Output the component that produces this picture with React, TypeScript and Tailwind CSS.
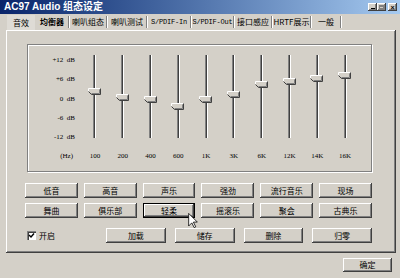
import React from "react"

const bevel =
  "shadow-[inset_-1px_-1px_0_#404040,inset_1px_1px_0_#ffffff,inset_-2px_-2px_0_#808080]"

const tabs = [
  { name: "均衡器", w: "w-[32px]", mono: false },
  { name: "喇叭组态", w: "w-[36px]", mono: false },
  { name: "喇叭测试", w: "w-[38px]", mono: false },
  { name: "S/PDIF-In", w: "w-[42px]", mono: true },
  { name: "S/PDIF-Out", w: "w-[41px]", mono: true },
  { name: "接口感应", w: "w-[36px]", mono: false },
  { name: "HRTF展示", w: "w-[37px]", mono: false },
  { name: "一般", w: "w-[28px]", mono: false },
]

// thumb centre, in page pixels
const bands = [
  { label: "100", y: 91 },
  { label: "200", y: 97 },
  { label: "400", y: 99 },
  { label: "600", y: 106 },
  { label: "1K", y: 99 },
  { label: "3K", y: 94 },
  { label: "6K", y: 84 },
  { label: "12K", y: 81 },
  { label: "14K", y: 78 },
  { label: "16K", y: 75 },
]

const dbLabels = ["+12 dB", "+6 dB", "0 dB", "-6 dB", "-12 dB"]

const presetsA = ["低音", "高音", "声乐", "强劲", "流行音乐", "现场"]
const presetsB = ["舞曲", "俱乐部", "轻柔", "摇滚乐", "聚会", "古典乐"]

function Button({ children, focused = false }: { children: React.ReactNode; focused?: boolean }) {
  return (
    <div
      className={`h-[15px] flex items-center justify-center bg-[#d4d0c8] text-[8px] leading-none ${
        focused
          ? "shadow-[inset_0_0_0_1px_#000000,inset_-2px_-2px_0_#404040,inset_2px_2px_0_#ffffff,inset_-3px_-3px_0_#808080]"
          : bevel
      }`}
    >
      {children}
    </div>
  )
}

function Thumb() {
  return (
    <svg width="13" height="7" viewBox="0 0 13 7">
      <polygon points="0.5,0.5 12.5,0.5 12.5,6.5 3.5,6.5 0.5,3.5" fill="#d4d0c8" />
      <polyline points="0.5,3.5 0.5,0.5 12.5,0.5" fill="none" stroke="#ffffff" />
      <polyline points="0.5,3.5 3.5,6.5 12.5,6.5 12.5,0.5" fill="none" stroke="#404040" />
      <polyline points="3.5,5.5 11.5,5.5 11.5,1.5" fill="none" stroke="#808080" />
    </svg>
  )
}

function Slider({ y }: { y: number }) {
  return (
    <div className="relative h-[89px] flex justify-center">
      <div className="mt-[1px] h-[83px] w-[3px] border-l border-[#808080] border-r border-r-white bg-[#404040]" />
      <div className="absolute left-[7px]" style={{ top: y - 54 - 3 }}>
        <Thumb />
      </div>
    </div>
  )
}

function Separator() {
  return <div className="self-center h-[12px] w-[2px] border-l border-[#808080] border-r border-r-white" />
}

export default function App() {
  return (
    <div className="relative w-[400px] h-[278px] overflow-hidden bg-[#d4d0c8] text-black font-['Noto_Sans_CJK_SC',sans-serif]">
      {/* title bar */}
      <div className="h-[14px] flex items-center justify-between pl-[4px] pr-[3px] bg-gradient-to-r from-[#0a246a] to-[#a6caf0]">
        <span className="text-white font-bold text-[10px] leading-none font-['Liberation_Sans','Noto_Sans_CJK_SC',sans-serif]">
          AC97 Audio 组态设定
        </span>
        <div className="flex items-center">
          <div className={`w-[9px] h-[8px] bg-[#d4d0c8] ${bevel} flex items-end justify-center pb-[2px]`}>
            <div className="w-[4px] h-[1px] bg-black" />
          </div>
          <div className={`w-[9px] h-[8px] bg-[#d4d0c8] ${bevel} flex items-center justify-center`}>
            <div className="w-[5px] h-[4px] border border-[#808080] border-t-2" />
          </div>
          <div className={`ml-[2px] w-[9px] h-[8px] bg-[#d4d0c8] ${bevel} flex items-center justify-center text-[7px] leading-none font-bold font-['Liberation_Sans',sans-serif]`}>
            ×
          </div>
        </div>
      </div>

      {/* tabs */}
      <div className="h-[16px] flex items-stretch pl-[7px] text-[8px] leading-none whitespace-nowrap">
        <div className="w-[28px] mt-[1px] flex items-center justify-center bg-[#dedbd5]">音效</div>
        <div className="w-[1px]" />
        {tabs.map((t) => (
          <React.Fragment key={t.name}>
            <div
              className={`${t.w} flex items-center justify-center whitespace-nowrap ${
                t.mono ? "font-['Liberation_Mono',monospace] text-[7px] tracking-[-0.2px]" : ""
              } ${t.name === "均衡器" ? "font-bold" : ""}`}
            >
              {t.name}
            </div>
            <Separator />
          </React.Fragment>
        ))}
      </div>

      {/* tab page */}
      <div className={`ml-[6px] w-[390px] h-[223px] pt-[14px] ${bevel}`}>
        {/* equalizer group */}
        <div className="ml-[21px] w-[345px] h-[128px] pt-[9px] border border-[#808080] shadow-[inset_1px_1px_0_#ffffff,1px_1px_0_#ffffff]">
          <div className="grid grid-cols-[53px_repeat(10,27.8px)] font-['Liberation_Serif',serif] text-[7px]">
            <div className="h-[89px] flex flex-col justify-between items-end pr-[6px]">
              {dbLabels.map((d) => (
                <div key={d} className="h-[12px] leading-[12px] whitespace-pre">
                  {d.replace(" ", "  ")}
                </div>
              ))}
            </div>
            {bands.map((b) => (
              <Slider key={b.label} y={b.y} />
            ))}
          </div>
          <div className="mt-[7px] grid grid-cols-[53px_repeat(10,27.8px)] font-['Liberation_Serif',serif] text-[7px] leading-[12px]">
            <div className="text-right pr-[8px]">(Hz)</div>
            {bands.map((b) => (
              <div key={b.label} className="text-center">
                {b.label}
              </div>
            ))}
          </div>
        </div>

        {/* presets */}
        <div className="mt-[11px] ml-[19px] w-[347px] grid grid-cols-6 gap-x-[6px] gap-y-[5px]">
          {presetsA.map((p) => (
            <Button key={p}>{p}</Button>
          ))}
          {presetsB.map((p) => (
            <Button key={p} focused={p === "轻柔"}>
              {p}
            </Button>
          ))}
        </div>

        {/* enable + actions */}
        <div className="mt-[10px] flex items-center">
          <div className="ml-[21px] w-[79px] flex items-center gap-[3px] text-[8px] leading-none">
            <div className="w-[9px] h-[9px] bg-white shadow-[inset_1px_1px_0_#808080,inset_2px_2px_0_#404040,inset_-1px_-1px_0_#ffffff] flex items-center justify-center">
              <svg width="7" height="7" viewBox="0 0 7 7">
                <polyline points="1,3 3,5 6,1.5" fill="none" stroke="#000" strokeWidth="1.4" />
              </svg>
            </div>
            <span>开启</span>
          </div>
          <div className="w-[266px] grid grid-cols-4 gap-x-[9px]">
            {["加载", "储存", "删除", "归零"].map((a) => (
              <Button key={a}>{a}</Button>
            ))}
          </div>
        </div>
      </div>

      {/* footer */}
      <div className="flex justify-end pr-[8px] pt-[5px]">
        <div className={`w-[49px] h-[14px] flex items-center justify-center text-[8px] leading-none ${bevel}`}>确定</div>
      </div>

      {/* mouse cursor over 轻柔 */}
      <svg className="absolute left-[188px] top-[213px]" width="10" height="15" viewBox="0 0 12 19">
        <path
          d="M0.5,0.5 L0.5,16.5 L4.5,12.5 L7.5,18.5 L9.5,17.5 L6.5,11.5 L11.5,11.5 Z"
          fill="#ffffff"
          stroke="#000000"
          strokeWidth="1"
        />
      </svg>
    </div>
  )
}
